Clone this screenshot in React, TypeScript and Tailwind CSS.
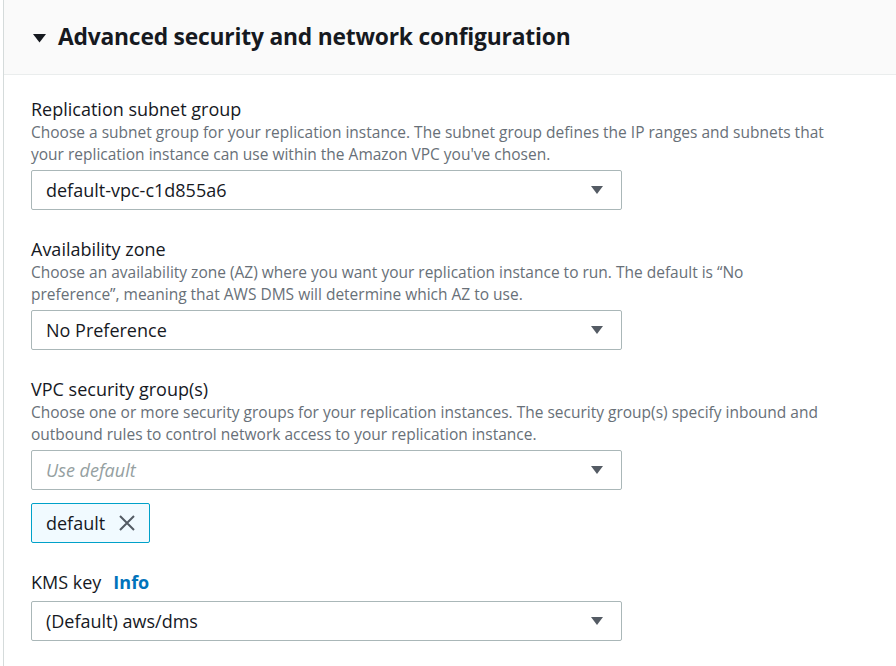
import React from 'react';

const Caret = () => (
  <svg width="14" height="10" viewBox="0 0 14 10" className="shrink-0">
    <path d="M1 1h12L7 9z" fill="#545b64" />
  </svg>
);

type SelectProps = { value: string; placeholder?: boolean };

const SelectBox = ({ value, placeholder }: SelectProps) => (
  <div className="flex h-[40px] w-[591px] items-center justify-between rounded-[2px] border border-[#aab7b8] bg-white pl-[14px] pr-[17px]">
    <span
      className={
        placeholder
          ? 'text-[18px] italic text-[#95a0a1]'
          : 'text-[18px] text-[#16191f]'
      }
    >
      {value}
    </span>
    <Caret />
  </div>
);

type FieldProps = {
  label: React.ReactNode;
  description?: React.ReactNode;
  children: React.ReactNode;
};

const Field = ({ label, description, children }: FieldProps) => (
  <div className="flex flex-col">
    <div className="text-[18px] leading-[24px] text-[#16191f]">{label}</div>
    {description && (
      <p className="mb-[5px] text-[15.5px] leading-[22px] text-[#687078]">{description}</p>
    )}
    {children}
  </div>
);

export default function App() {
  return (
    <div
      className="h-[666px] w-[896px] overflow-hidden bg-white"
      style={{ fontFamily: '"Open Sans", "Noto Sans", sans-serif' }}
    >
      <div className="ml-[3px] h-full border-l border-[#d5dbdb]">
        {/* Header */}
        <div className="flex h-[75px] items-center gap-[12px] border-b border-[#eaeded] bg-[#fafafa] pt-[1px] pl-[29px]">
          <svg width="13" height="10" viewBox="0 0 13 10">
            <path d="M0 1h13L6.5 9.5z" fill="#16191f" />
          </svg>
          <h2 className="text-[22.8px] font-bold tracking-[-0.2px] text-[#16191f]">
            Advanced security and network configuration
          </h2>
        </div>

        {/* Body */}
        <div className="flex flex-col gap-[27px] pl-[27px] pt-[22px]">
          <Field
            label="Replication subnet group"
            description={
              <>
                Choose a subnet group for your replication instance. The subnet group defines the IP ranges and subnets that
                <br />
                your replication instance can use within the Amazon VPC you've chosen.
              </>
            }
          >
            <SelectBox value="default-vpc-c1d855a6" />
          </Field>

          <Field
            label="Availability zone"
            description={
              <>
                Choose an availability zone (AZ) where you want your replication instance to run. The default is “No
                <br />
                preference”, meaning that AWS DMS will determine which AZ to use.
              </>
            }
          >
            <SelectBox value="No Preference" />
          </Field>

          <Field
            label="VPC security group(s)"
            description={
              <>
                Choose one or more security groups for your replication instances. The security group(s) specify inbound and
                <br />
                outbound rules to control network access to your replication instance.
              </>
            }
          >
            <SelectBox value="Use default" placeholder />
            <div className="mt-[13px] flex h-[40px] w-[119px] items-center gap-[13px] rounded-[2px] border border-[#00a1c9] bg-[#f1faff] pl-[14px]">
              <span className="text-[18px] text-[#16191f]">default</span>
              <svg width="18" height="18" viewBox="0 0 18 18">
                <path d="M2 2l14 14M16 2L2 16" stroke="#545b64" strokeWidth="2" />
              </svg>
            </div>
          </Field>

          <Field
            label={
              <span className="flex items-center gap-[12px]">
                KMS key
                <span className="font-bold text-[#0073bb]">Info</span>
              </span>
            }
          >
            <div className="mt-[7px]">
              <SelectBox value="(Default) aws/dms" />
            </div>
          </Field>
        </div>
      </div>
    </div>
  );
}
